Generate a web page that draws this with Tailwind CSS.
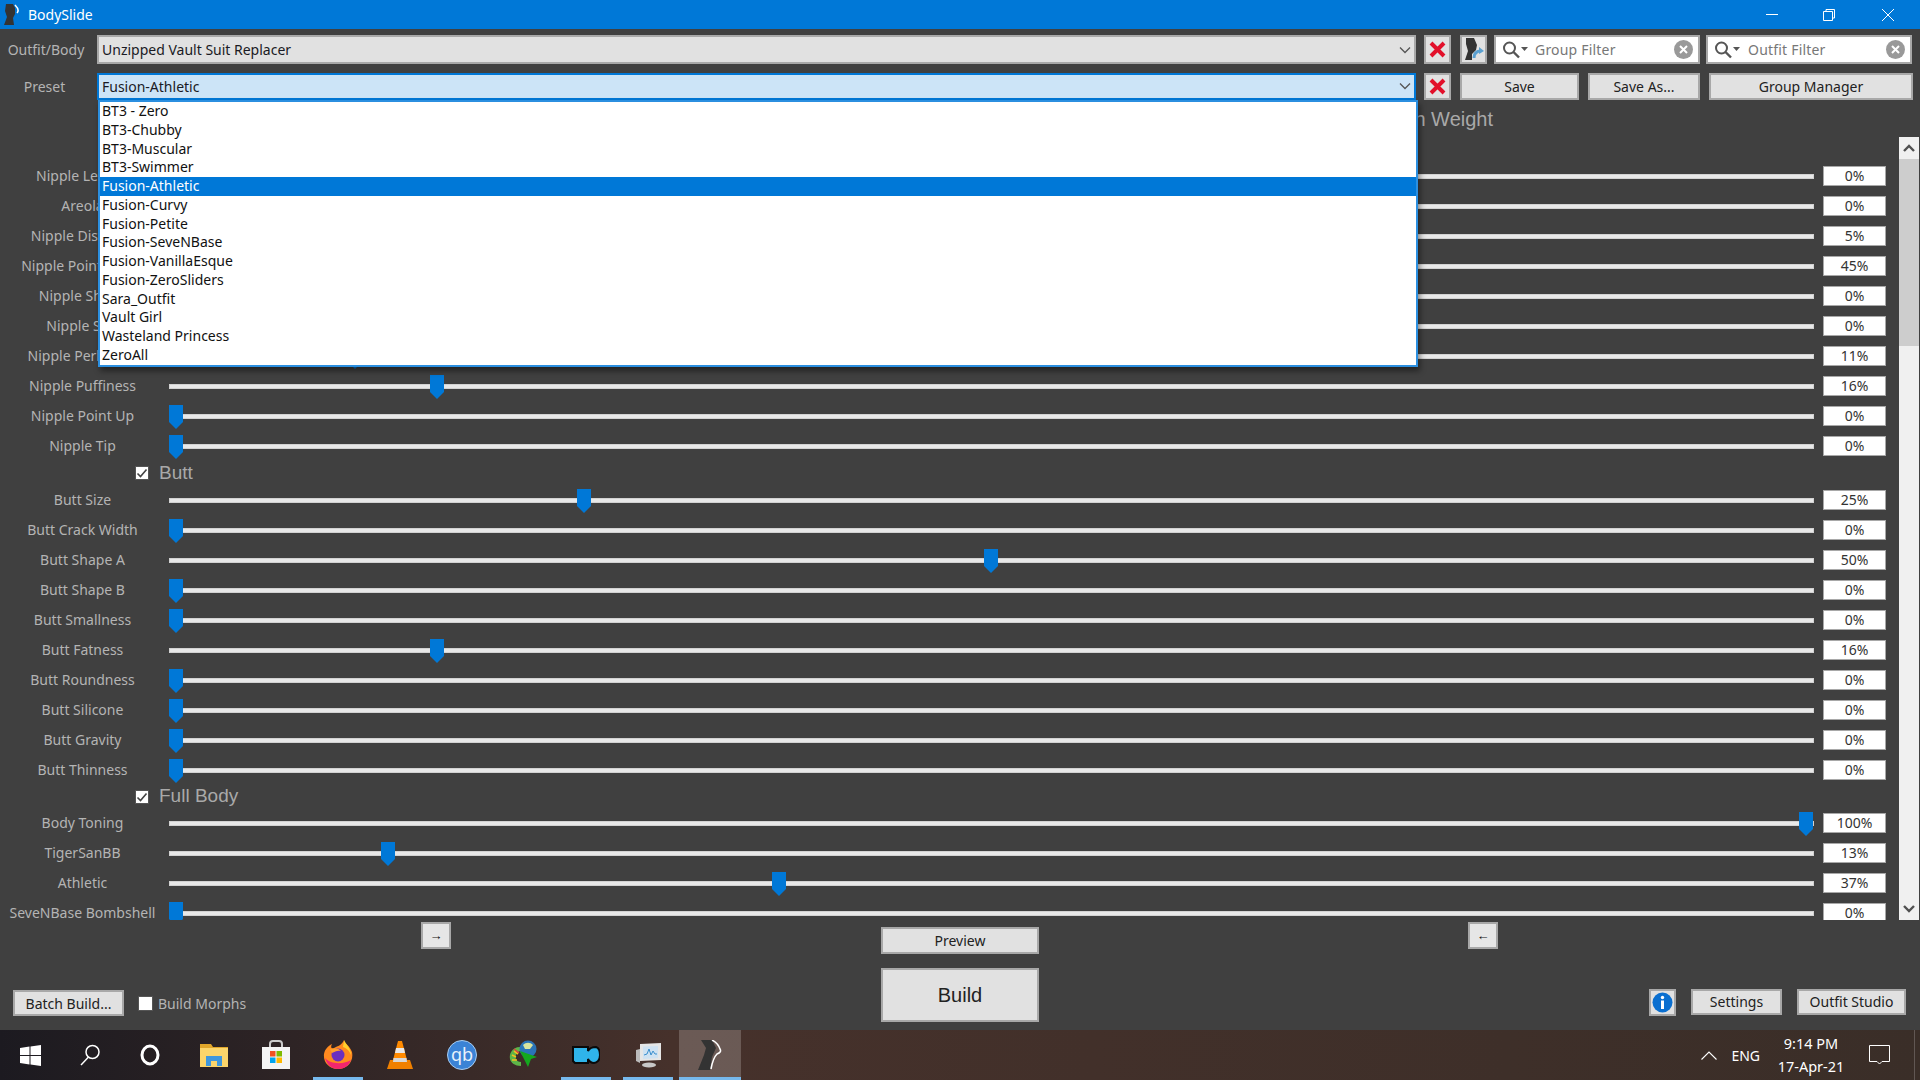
<!DOCTYPE html>
<html>
<head>
  <meta charset="UTF-8">
  <title>BodySlide</title>
  <script src="https://cdn.jsdelivr.net/npm/@tailwindcss/browser@4"></script>
</head>
<body class="bg-[#404040] overflow-hidden font-['Noto_Sans',sans-serif] text-[14px]">
  <div class="w-[1920px] h-[1080px] flex flex-col overflow-hidden">

    <!-- Title bar -->
    <div class="h-[29px] shrink-0 bg-[#0078d7] flex items-center text-white">
      <svg class="ml-[4px] w-[16px] h-[22px]" viewBox="0 0 16 22"><path d="M2 0H9L11 4L11 10L9 14L10 21H0L3 13L1 7Z" fill="#333"/><path d="M11 1C14 4 15 7 13 9" fill="none" stroke="#fff" stroke-width="1.5"/></svg>
      <span class="ml-[8px] text-[14px]">BodySlide</span>
      <div class="ml-auto flex items-center">
        <svg class="w-[14px] h-[14px] mr-[43px]" viewBox="0 0 14 14"><path d="M1 6.5H13" stroke="#fff"/></svg>
        <svg class="w-[14px] h-[14px] mr-[45px]" viewBox="0 0 14 14"><path d="M1.5 3.5H10.5V12.5H1.5ZM4 3.5V1.5H12.5V10H10.5" fill="none" stroke="#fff"/></svg>
        <svg class="w-[14px] h-[14px] mr-[25px]" viewBox="0 0 14 14"><path d="M1 1L13 13M13 1L1 13" stroke="#fff"/></svg>
      </div>
    </div>

    <!-- Outfit row -->
    <div class="flex items-center mt-[6px] h-[29px] shrink-0">
      <div class="w-[97px] text-center text-[#b4b4b4] pr-[5px] whitespace-nowrap">Outfit/Body</div>
      <div class="w-[1319px] h-[29px] bg-[#e1e1e1] border-2 border-[#a8a8a8] flex items-center pl-[3px] text-[#1a1a24]">
        Unzipped Vault Suit Replacer
        <svg class="ml-auto mr-[3px] w-[12px] h-[12px]" viewBox="0 0 12 12"><path d="M1 3.5L6 8.5L11 3.5" fill="none" stroke="#555" stroke-width="1.3"/></svg>
      </div>
      <button class="ml-[8px] w-[27px] h-[29px] bg-[#e1e1e1] border-2 border-[#a8a8a8] flex items-center justify-center">
        <svg class="w-[17px] h-[17px]" viewBox="0 0 17 17"><path d="M2 2L15 15M15 2L2 15" stroke="#e2102a" stroke-width="4"/></svg>
      </button>
      <button class="ml-[9px] w-[27px] h-[29px] bg-[#e1e1e1] border-2 border-[#a8a8a8] flex items-center justify-center">
        <svg class="w-[21px] h-[25px]" viewBox="0 0 21 25"><path d="M3 1H11L14 8L13 13L9 17L9 23H2L5 14L3 7Z" fill="#333"/><path d="M11 21C11 16 14 14 18 14" fill="none" stroke="#5aa0d0" stroke-width="3"/><path d="M16 10L21 14L16 17Z" fill="#5aa0d0"/></svg>
      </button>
      <div class="ml-[7px] w-[206px] h-[29px] bg-white border-2 border-[#a8a8a8] flex items-center text-[#777]">
        <svg class="ml-[6px] w-[28px] h-[18px]" viewBox="0 0 28 18"><circle cx="7.5" cy="7" r="5.5" fill="none" stroke="#555" stroke-width="2"/><path d="M11.5 11L17 16.5" stroke="#555" stroke-width="2.4"/><path d="M19 6H26L22.5 10Z" fill="#555"/></svg>
        <span class="ml-[5px] tracking-[0.2px]">Group Filter</span>
        <svg class="ml-auto mr-[5px] w-[19px] h-[19px]" viewBox="0 0 19 19"><circle cx="9.5" cy="9.5" r="9.5" fill="#999"/><path d="M6 6L13 13M13 6L6 13" stroke="#fff" stroke-width="2"/></svg>
      </div>
      <div class="ml-[6px] w-[206px] h-[29px] bg-white border-2 border-[#a8a8a8] flex items-center text-[#777]">
        <svg class="ml-[6px] w-[28px] h-[18px]" viewBox="0 0 28 18"><circle cx="7.5" cy="7" r="5.5" fill="none" stroke="#555" stroke-width="2"/><path d="M11.5 11L17 16.5" stroke="#555" stroke-width="2.4"/><path d="M19 6H26L22.5 10Z" fill="#555"/></svg>
        <span class="ml-[6px] tracking-[0.2px]">Outfit Filter</span>
        <svg class="ml-auto mr-[5px] w-[19px] h-[19px]" viewBox="0 0 19 19"><circle cx="9.5" cy="9.5" r="9.5" fill="#999"/><path d="M6 6L13 13M13 6L6 13" stroke="#fff" stroke-width="2"/></svg>
      </div>
    </div>

    <!-- Preset row -->
    <div class="flex items-center mt-[9px] h-[27px] shrink-0 relative z-10">
      <div class="w-[97px] text-center text-[#b4b4b4] pr-[8px]">Preset</div>
      <div class="relative w-[1319px] h-[27px] bg-[#cce4f7] border-2 border-[#0078d7] flex items-center pl-[3px] pb-[1px] text-[#1a1a24]">
        Fusion-Athletic
        <svg class="ml-auto mr-[3px] w-[12px] h-[12px]" viewBox="0 0 12 12"><path d="M1 3.5L6 8.5L11 3.5" fill="none" stroke="#555" stroke-width="1.3"/></svg>
        <div id="presets" class="absolute left-[-1px] top-[25px] w-[1320px] bg-white border-2 border-[#2b8fe0] shadow-[2px_4px_6px_rgba(0,0,0,0.45)] text-[#111] leading-[18.75px]"></div>
      </div>
      <button class="ml-[8px] w-[27px] h-[27px] bg-[#e1e1e1] border-2 border-[#a8a8a8] flex items-center justify-center">
        <svg class="w-[17px] h-[17px]" viewBox="0 0 17 17"><path d="M2 2L15 15M15 2L2 15" stroke="#e2102a" stroke-width="4"/></svg>
      </button>
      <button class="ml-[9px] w-[119px] h-[27px] bg-[#e1e1e1] border-2 border-[#a8a8a8] text-[#222] pb-[1px]">Save</button>
      <button class="ml-[9px] w-[112px] h-[27px] bg-[#e1e1e1] border-2 border-[#a8a8a8] text-[#222] pb-[1px]">Save As...</button>
      <button class="ml-[9px] w-[204px] h-[27px] bg-[#e1e1e1] border-2 border-[#a8a8a8] text-[#222] pb-[1px]">Group Manager</button>
    </div>

    <!-- Sliders header, mostly behind the open dropdown -->
    <div class="h-[37px] shrink-0 flex items-center justify-end pr-[427px] text-[20px] text-[#a9a9a9] font-['Liberation_Sans',sans-serif]">High Weight</div>

    <!-- Sliders -->
    <div class="h-[783px] shrink-0 flex overflow-hidden">
      <div id="sliders" class="w-[1899px] pt-[24px]"></div>
      <div class="w-[20px] h-[783px] bg-[#f0f0f0] flex flex-col">
        <div class="h-[22px] flex items-center justify-center">
          <svg class="w-[12px] h-[10px]" viewBox="0 0 12 10"><path d="M1 8L6 3L11 8" fill="none" stroke="#505050" stroke-width="2.4"/></svg>
        </div>
        <div class="h-[187px] bg-[#cdcdcd]"></div>
        <div class="mt-auto h-[22px] flex items-center justify-center">
          <svg class="w-[12px] h-[10px]" viewBox="0 0 12 10"><path d="M1 2L6 7L11 2" fill="none" stroke="#505050" stroke-width="2.4"/></svg>
        </div>
      </div>
    </div>

    <!-- Bottom controls -->
    <div class="h-[110px] shrink-0 flex flex-col">
      <div class="flex items-start pt-[2px] h-[48px]">
        <button class="ml-[421px] w-[30px] h-[27px] bg-[#e6e6e6] border-2 border-[#a8a8a8] text-[#111] font-bold leading-none text-[13px]">→</button>
        <button class="ml-[430px] mt-[5px] w-[158px] h-[27px] bg-[#e1e1e1] border-2 border-[#a8a8a8] text-[#222]">Preview</button>
        <button class="ml-[429px] w-[30px] h-[27px] bg-[#e6e6e6] border-2 border-[#a8a8a8] text-[#111] font-bold leading-none text-[13px]">←</button>
      </div>
      <div class="flex items-start h-[54px]">
        <div class="w-[881px] flex items-center pl-[13px] pt-[22px]">
          <button class="w-[111px] h-[26px] bg-[#e1e1e1] border-2 border-[#a8a8a8] text-[#222]">Batch Build...</button>
          <span class="ml-[14px] w-[15px] h-[15px] bg-white border border-[#555]"></span>
          <span class="ml-[5px] text-[#b4b4b4]">Build Morphs</span>
        </div>
        <button class="w-[158px] h-[54px] bg-[#e1e1e1] border-2 border-[#a8a8a8] text-[20px] text-[#222] font-['Liberation_Sans',sans-serif]">Build</button>
        <div class="flex-1 flex items-start justify-end pr-[14px] pt-[21px]">
          <button class="w-[27px] h-[27px] bg-[#e1e1e1] border-2 border-[#a8a8a8] flex items-center justify-center">
            <svg class="w-[21px] h-[21px]" viewBox="0 0 21 21"><circle cx="10.5" cy="10.5" r="10" fill="#0a6fd0"/><circle cx="10.5" cy="5.5" r="1.7" fill="#fff"/><rect x="9" y="8.5" width="3" height="8.5" fill="#fff"/></svg>
          </button>
          <button class="ml-[15px] w-[91px] h-[26px] bg-[#e1e1e1] border-2 border-[#a8a8a8] text-[#222] pb-[1px]">Settings</button>
          <button class="ml-[15px] w-[109px] h-[26px] bg-[#e1e1e1] border-2 border-[#a8a8a8] text-[#222] pb-[1px]">Outfit Studio</button>
        </div>
      </div>
    </div>

    <!-- Taskbar -->
    <div class="h-[50px] shrink-0 flex items-center text-white bg-linear-to-r from-[#1c1a20] via-[#46312b] via-35% to-[#3a2e28]">
      <div class="w-[60px] h-[50px] flex items-center justify-center">
        <svg class="w-[21px] h-[21px]" viewBox="0 0 21 21"><path d="M0 3L9.5 1.6V10H0ZM10.5 1.4L21 0V10H10.5ZM0 11H9.5V19.4L0 18ZM10.5 11H21V21L10.5 19.6Z" fill="#fff"/></svg>
      </div>
      <div class="w-[60px] h-[50px] flex items-center justify-center">
        <svg class="w-[22px] h-[22px]" viewBox="0 0 22 22"><circle cx="13.5" cy="8" r="6.5" fill="none" stroke="#fff" stroke-width="1.5"/><path d="M9.5 13L2 21" stroke="#fff" stroke-width="1.5"/></svg>
      </div>
      <div class="w-[60px] h-[50px] flex items-center justify-center">
        <svg class="w-[22px] h-[22px]" viewBox="0 0 22 22"><ellipse cx="11" cy="11" rx="8" ry="9" fill="none" stroke="#fff" stroke-width="3"/></svg>
      </div>
      <div class="ml-[3px] w-[62px] h-[50px] flex items-center justify-center">
        <svg class="w-[28px] h-[26px]" viewBox="0 0 28 26"><path d="M0 2H11L13 5H28V25H0Z" fill="#e0a62a"/><path d="M0 6H28V25H0Z" fill="#fbd56b"/><path d="M6 24V14H22V24H17V19H11V24Z" fill="#3f97dc"/></svg>
      </div>
      <div class="w-[62px] h-[50px] flex items-center justify-center">
        <svg class="w-[30px] h-[30px]" viewBox="0 0 30 30"><path d="M9 8V4Q9 1 12 1H18Q21 1 21 4V8" fill="none" stroke="#ccc" stroke-width="2"/><path d="M1 7H29V29H1Z" fill="#f4f4f4"/><rect x="9" y="11" width="5.5" height="5.5" fill="#f25022"/><rect x="15.5" y="11" width="5.5" height="5.5" fill="#7fba00"/><rect x="9" y="17.5" width="5.5" height="5.5" fill="#00a4ef"/><rect x="15.5" y="17.5" width="5.5" height="5.5" fill="#ffb900"/></svg>
      </div>
      <div class="w-[62px] h-[50px] relative flex items-center justify-center">
        <svg class="w-[30px] h-[30px]" viewBox="0 0 30 30"><path d="M21 0C22 4 27 6 29 12C31 22 24 29 15 29C6 29 0 22 1 14C2 9 5 6 9 4C7 8 9 9 11 8C15 6 19 5 21 0Z" fill="#ff8a1f"/><path d="M2 18C4 26 10 29 15 29C21 29 26 26 28 20C22 24 8 25 2 18Z" fill="#f3266e"/><path d="M21 0C23 5 28 8 28 15C26 10 23 8 20 7C20 5 21 3 21 0Z" fill="#ffd02c"/><circle cx="15" cy="15" r="6.5" fill="#6b2fc0"/><path d="M7 9C11 8 16 8 18 11C14 10 12 12 9 13Z" fill="#ff9f2e"/></svg>
        <div class="absolute bottom-0 inset-x-[6px] h-[3px] bg-[#76b9ed]"></div>
      </div>
      <div class="w-[62px] h-[50px] flex items-center justify-center">
        <svg class="w-[26px] h-[30px]" viewBox="0 0 26 30"><path d="M11 1H15L20 20H6Z" fill="#ff8a00"/><path d="M9 8H17L18 13H8Z" fill="#e8e8e8"/><path d="M3 20H23L26 29H0Z" fill="#f08000"/><path d="M6.5 18H19.5L20 22H6Z" fill="#d8d8d8"/></svg>
      </div>
      <div class="w-[62px] h-[50px] flex items-center justify-center">
        <div class="w-[30px] h-[30px] rounded-full bg-[#3b83d6] border border-[#a9cdf0] flex items-center justify-center text-[#e8f2fb] text-[18px] leading-none pb-[2px]">qb</div>
      </div>
      <div class="w-[62px] h-[50px] flex items-center justify-center">
        <svg class="w-[30px] h-[30px]" viewBox="0 0 30 30"><path d="M11 7C3 7 0 14 1 19C2 23 6 26 12 26L12 22C7 22 6 18 7 15C8 12 10 11 12 11Z" fill="#5db548"/><path d="M5 11L9 14M3 15L7 17M3 20L8 20" stroke="#f0c020" stroke-width="1.6"/><path d="M5 9L10 13" stroke="#e04040" stroke-width="1.6"/><circle cx="19" cy="9" r="8.5" fill="#2a74b8"/><path d="M14 5C17 2 21 2 24 5L21 9L16 9Z" fill="#d8e4a0"/><path d="M11 11L28 17L22 19L19 27Z" fill="#14a81e"/></svg>
      </div>
      <div class="w-[62px] h-[50px] relative flex items-center justify-center">
        <svg class="w-[28px] h-[18px]" viewBox="0 0 28 18"><path d="M1 1H16V5C18 1 22 1 24 1C27 2 28 5 28 9C28 14 25 17 22 17C19 17 17 15 16 13V17H3L1 15Z" fill="#2fb4ea" stroke="#0a0a0a" stroke-width="2"/></svg>
        <div class="absolute bottom-0 inset-x-[6px] h-[3px] bg-[#76b9ed]"></div>
      </div>
      <div class="w-[62px] h-[50px] relative flex items-center justify-center">
        <svg class="w-[28px] h-[26px]" viewBox="0 0 28 26"><path d="M6 2L27 1V18L6 19Z" fill="#e6e6e6"/><path d="M9 4.5L24 4V16L9 17Z" fill="#cfe2f2"/><path d="M10 13L13 12L15 7L17 13L19 9L21 12L23 12" fill="none" stroke="#3b8fce"/><path d="M2 8L6 7V21L2 19Z" fill="#bbb"/><ellipse cx="15" cy="23" rx="7" ry="2.5" fill="#c8c8c8"/></svg>
        <div class="absolute bottom-0 inset-x-[6px] h-[3px] bg-[#76b9ed]"></div>
      </div>
      <div class="w-[62px] h-[50px] relative flex items-center justify-center bg-white/20">
        <svg class="w-[24px] h-[30px]" viewBox="0 0 24 30"><path d="M3 0H14L18 8L14 17L12 30H0L6 15L8 8Z" fill="#333"/><path d="M14 0Q20 3 22 9Q24 12 19 14Q15 18 13 29" fill="none" stroke="#fff" stroke-width="1.5"/></svg>
        <div class="absolute bottom-0 inset-x-0 h-[3px] bg-[#76b9ed]"></div>
      </div>
      <div class="ml-auto flex items-center">
        <svg class="w-[16px] h-[9px]" viewBox="0 0 16 9"><path d="M0.5 8.5L8 1L15.5 8.5" fill="none" stroke="#fff" stroke-width="1.1"/></svg>
        <span class="ml-[14px] text-[14px]">ENG</span>
        <div class="ml-[16px] w-[70px] flex flex-col items-center text-[14.5px] leading-[23px] whitespace-nowrap">
          <span>9:14 PM</span>
          <span>17-Apr-21</span>
        </div>
        <svg class="ml-[23px] w-[21px] h-[21px]" viewBox="0 0 21 21"><path d="M0.5 0.5H20.5V16.5H13L10.5 19L8 16.5H0.5Z" fill="none" stroke="#fff"/></svg>
        <div class="ml-[24px] mr-[5px] w-px h-[50px] bg-white/20"></div>
      </div>
    </div>
  </div>

  <script>
    const presets = ['BT3 - Zero', 'BT3-Chubby', 'BT3-Muscular', 'BT3-Swimmer', 'Fusion-Athletic', 'Fusion-Curvy', 'Fusion-Petite',
      'Fusion-SeveNBase', 'Fusion-VanillaEsque', 'Fusion-ZeroSliders', 'Sara_Outfit', 'Vault Girl', 'Wasteland Princess', 'ZeroAll'];

    document.getElementById('presets').innerHTML = presets.map(name => {
      const selected = name === 'Fusion-Athletic';
      return `<div class="h-[18.75px] pl-[2px] ${selected ? 'bg-[#0078d7] text-white' : ''}">${name}</div>`;
    }).join('');

    const groups = [
      { rows: [['Nipple Length', 0], ['Areola', 0], ['Nipple Distance', 5], ['Nipple Point Down', 45], ['Nipple Shape', 0], ['Nipple Size', 0],
        ['Nipple Perkiness', 11], ['Nipple Puffiness', 16], ['Nipple Point Up', 0], ['Nipple Tip', 0]] },
      { title: 'Butt', headerClass: 'h-[24px]', rows: [['Butt Size', 25], ['Butt Crack Width', 0], ['Butt Shape A', 50], ['Butt Shape B', 0], ['Butt Smallness', 0],
        ['Butt Fatness', 16], ['Butt Roundness', 0], ['Butt Silicone', 0], ['Butt Gravity', 0], ['Butt Thinness', 0]] },
      { title: 'Full Body', headerClass: 'h-[23px]', rows: [['Body Toning', 100], ['TigerSanBB', 13], ['Athletic', 37], ['SeveNBase Bombshell', 0]] }
    ];

    function sliderRow([label, value]) {
      return `<div class="h-[30px] flex items-center">
        <div class="w-[165px] text-center text-[#b4b4b4] whitespace-nowrap pb-[2px]">${label}</div>
        <div class="relative ml-[4px] w-[1645px] h-[24px] flex items-center">
          <div class="w-full h-[5px] bg-[#e8e8e8] border border-[#d2d2d2]"></div>
          <svg class="absolute top-[1px] w-[14px] h-[24px]" style="left:${value * 16.3}px" viewBox="0 0 14 24"><path d="M0 0H14V17L7 24L0 17Z" fill="#0078d7"/></svg>
        </div>
        <div class="ml-[9px] w-[63px] h-[20px] bg-white border border-[#a8a8a8] text-center leading-[17px] text-[#333]">${value}%</div>
      </div>`;
    }

    function groupHeader(group) {
      return `<div class="${group.headerClass} flex items-center pl-[135px]">
        <span class="w-[14px] h-[14px] bg-white border border-[#555] flex items-center justify-center">
          <svg class="w-[12px] h-[12px]" viewBox="0 0 12 12"><path d="M1.5 6.5L4.5 9.5L10.5 2.5" fill="none" stroke="#444" stroke-width="1.6"/></svg>
        </span>
        <span class="ml-[10px] text-[19px] text-[#a9a9a9] font-['Liberation_Sans',sans-serif]">${group.title}</span>
      </div>`;
    }

    document.getElementById('sliders').innerHTML = groups.map(group =>
      (group.title ? groupHeader(group) : '') + group.rows.map(sliderRow).join('')
    ).join('');
  </script>
</body>
</html>
